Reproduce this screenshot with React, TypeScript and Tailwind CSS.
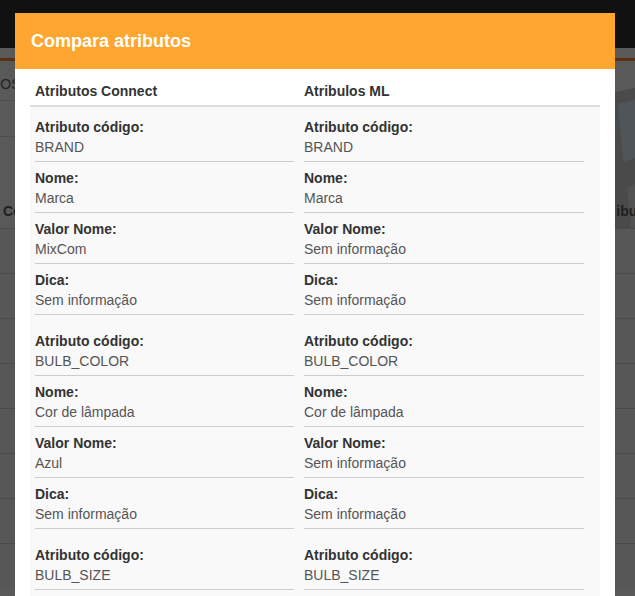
const labels = ["Atributo código:", "Nome:", "Valor Nome:", "Dica:"];

const groups = [
	{
		left: ["BRAND", "Marca", "MixCom", "Sem informação"],
		right: ["BRAND", "Marca", "Sem informação", "Sem informação"],
	},
	{
		left: ["BULB_COLOR", "Cor de lâmpada", "Azul", "Sem informação"],
		right: ["BULB_COLOR", "Cor de lâmpada", "Sem informação", "Sem informação"],
	},
	{
		left: ["BULB_SIZE", "Tamanho da lâmpada", "A60", "Sem informação"],
		right: ["BULB_SIZE", "Tamanho da lâmpada", "Sem informação", "Sem informação"],
	},
];

function Column({ values, width }: { values: string[]; width: string }) {
	return (
		<div className={width}>
			{values.map((v, i) => (
				<div key={i} className="border-b border-[#cccccc] pt-[6px] pb-[4px]">
					<div className="text-[14px] leading-5 font-bold text-[#333333]">{labels[i]}</div>
					<div className="text-[14px] leading-5 text-[#555555]">{v}</div>
				</div>
			))}
		</div>
	);
}

function BackgroundPage() {
	const rows = [0, 1, 2, 3, 4, 5, 6, 7];
	return (
		<div className="flex flex-col">
			<div className="h-[48px] bg-[#111111]" />
			<div className="h-[10px] bg-[#5a5a5a]" />
			<div className="h-[3px] bg-[#5c2f0f]" />
			<div className="flex h-[39px] items-end pb-[5px] text-[14px] text-[#222222]">
				<span className="-ml-[9px]">POS</span>
			</div>
			<div className="h-[36px] border-t border-[#4d4d4d]" />
			<div className="h-[55px] border-t border-[#4d4d4d]" />
			<div className="relative z-10 flex h-[37px] items-center justify-between pt-[4px] text-[14px] font-bold text-[#1e1e1e]">
				<span className="ml-[3px]">Co</span>
				<span className="-mr-[7px]">ibut</span>
			</div>
			{rows.map((r) => (
				<div key={r} className="h-[45px] border-t border-[#4a4a4a] bg-[#575757]" />
			))}
		</div>
	);
}

export default function App() {
	return (
		<div className="relative h-[596px] w-full overflow-hidden bg-[#595959] font-['Liberation_Sans',Arial,sans-serif]">
			<BackgroundPage />
			<svg className="absolute left-[615px] top-[88px]" width="20" height="140" viewBox="0 0 20 140">
				<polygon points="0,4 20,0 20,140 0,140" fill="#4a4a4a" />
				<polygon points="3,16 20,12 20,70 8,74" fill="#4f5559" />
				<polygon points="12,100 20,96 20,140 16,140" fill="#525252" />
			</svg>
			<div className="absolute left-[15px] top-[13px] z-20 w-[600px] bg-white">
				<div className="flex h-[56px] items-center bg-[#ffa630] px-[16px] text-[18px] font-bold text-white">
					Compara atributos
				</div>
				<div className="px-[15px]">
					<div className="flex border-b-2 border-[#dddddd] pt-[12px] pb-[4px] text-[14px] leading-5 font-bold text-[#333333]">
						<div className="ml-[5px] w-[269px]">Atributos Connect</div>
						<div>Atribulos ML</div>
					</div>
					<div className="bg-[#f9f9f9] pt-[4px]">
						{groups.map((g, i) => (
							<div key={i} className="mb-[10px] flex pl-[5px]">
								<Column values={g.left} width="w-[259px]" />
								<div className="w-[10px]" />
								<Column values={g.right} width="w-[280px]" />
							</div>
						))}
					</div>
				</div>
			</div>
		</div>
	);
}
